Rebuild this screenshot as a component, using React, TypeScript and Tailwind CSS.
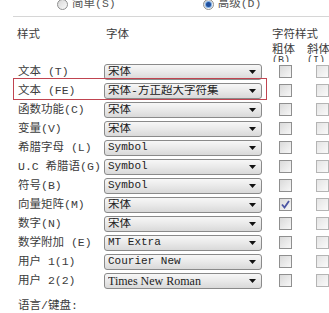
import { ReactNode } from 'react';

interface Row {
  label: string;
  font: string;
  fontClass?: string;
  bold?: boolean;
  highlight?: boolean;
}

const rows: Row[] = [
  { label: '文本 (T)', font: '宋体' },
  { label: '文本 (FE)', font: '宋体-方正超大字符集', highlight: true },
  { label: '函数功能(C)', font: '宋体' },
  { label: '变量(V)', font: '宋体' },
  { label: '希腊字母 (L)', font: 'Symbol', fontClass: 'mono' },
  { label: 'U.C 希腊语(G)', font: 'Symbol', fontClass: 'mono' },
  { label: '符号(B)', font: 'Symbol', fontClass: 'mono' },
  { label: '向量矩阵(M)', font: '宋体', bold: true },
  { label: '数字(N)', font: '宋体' },
  { label: '数学附加 (E)', font: 'MT Extra', fontClass: 'mono' },
  { label: '用户 1(1)', font: 'Courier New', fontClass: 'mono' },
  { label: '用户 2(2)', font: 'Times New Roman', fontClass: 'serif' },
];

function Radio({ checked, children }: { checked?: boolean; children: ReactNode }) {
  return (
    <div className="flex items-center gap-[4px]">
      <span className="w-[11px] h-[11px] rounded-full border border-[#8e8f8f] bg-gradient-to-br from-[#d6d6d6] to-[#fbfbfb] flex items-center justify-center">
        {checked && <span className="w-[5px] h-[5px] rounded-full bg-[#1f4e9c] ring-1 ring-[#7fb0e8]" />}
      </span>
      <span className="text-[#555]">{children}</span>
    </div>
  );
}

function Checkbox({ checked, faded }: { checked?: boolean; faded?: boolean }) {
  return (
    <span
      className={`w-[13px] h-[13px] shrink-0 border flex items-center justify-center bg-gradient-to-br ${
        faded ? 'border-[#b4b4b4] from-[#e4e4e4] to-[#fafafa]' : 'border-[#8f8f8f] from-[#dadada] to-[#f7f7f7]'
      }`}
    >
      {checked && (
        <svg width="9" height="9" viewBox="0 0 9 9">
          <path d="M1 4.5 L3.5 7.5 L8 1" stroke="#4b55a3" strokeWidth="1.8" fill="none" />
        </svg>
      )}
    </span>
  );
}

function Combo({ value, fontClass }: { value: string; fontClass?: string }) {
  const face =
    fontClass === 'mono'
      ? "font-['Liberation_Mono',monospace] text-[11px]"
      : fontClass === 'serif'
      ? "font-['Liberation_Serif',serif] text-[12px]"
      : 'text-[11.5px]';
  return (
    <div className="w-[158px] h-[16px] shrink-0 rounded-[3px] border border-[#8a8a8a] bg-gradient-to-b from-[#f7f7f7] via-[#e9e9e9] to-[#d9d9d9] flex items-center pl-[3px] pr-[5px]">
      <span className={`flex-1 text-[#222] whitespace-nowrap overflow-hidden leading-none ${face}`}>{value}</span>
      <svg width="7" height="4" viewBox="0 0 7 4">
        <path d="M0 0 H7 L3.5 4 Z" fill="#111" />
      </svg>
    </div>
  );
}

export default function App() {
  return (
    <div className="w-[329px] h-[313px] overflow-hidden bg-white text-[11.5px] leading-[14px] font-['Liberation_Mono','Noto_Sans_CJK_SC',monospace] text-[#3c3c3c]">
      <div className="flex items-center h-[12px] -mt-[2px]">
        <div className="ml-[57px]">
          <Radio>简单(S)</Radio>
        </div>
        <div className="ml-[87px]">
          <Radio checked>高级(D)</Radio>
        </div>
      </div>
      <div className="ml-[13px] mt-[6px] h-px bg-[#d6d6d6]" />

      <div className="flex h-[36px] mt-[9px] overflow-hidden">
        <div className="w-[104px] shrink-0 pl-[17px] font-['Noto_Sans_CJK_SC',sans-serif]">样式</div>
        <div className="w-[168px] shrink-0 pl-[2px] font-['Noto_Sans_CJK_SC',sans-serif]">字体</div>
        <div className="w-[57px] shrink-0 flex flex-col whitespace-nowrap">
          <div className="font-['Noto_Sans_CJK_SC',sans-serif]">字符样式</div>
          <div className="flex mt-[1px]">
            <div className="w-[35px] shrink-0 flex flex-col">
              <span className="font-['Noto_Sans_CJK_SC',sans-serif]">粗体</span>
              <span className="text-[10px] leading-[10px] mt-[1px]">(B)</span>
            </div>
            <div className="w-[30px] shrink-0 flex flex-col">
              <span className="font-['Noto_Sans_CJK_SC',sans-serif]">斜体</span>
              <span className="text-[10px] leading-[10px] mt-[1px]">(I)</span>
            </div>
          </div>
        </div>
      </div>

      <div className="flex flex-col">
        {rows.map((r) => (
          <div key={r.label} className="relative flex items-center h-[19px]">
            {r.highlight && (
              <div className="absolute left-[13px] top-[-3px] w-[254px] h-[22px] border border-[#c04450]" />
            )}
            <div className="w-[104px] shrink-0 pl-[18px] whitespace-nowrap">{r.label}</div>
            <Combo value={r.font} fontClass={r.fontClass} />
            <div className="ml-[17px] shrink-0">
              <Checkbox checked={r.bold} />
            </div>
            <div className="ml-[24px] shrink-0">
              <Checkbox faded />
            </div>
          </div>
        ))}
      </div>

      <div className="mt-[9px] pl-[18px]">语言/键盘:</div>
    </div>
  );
}
